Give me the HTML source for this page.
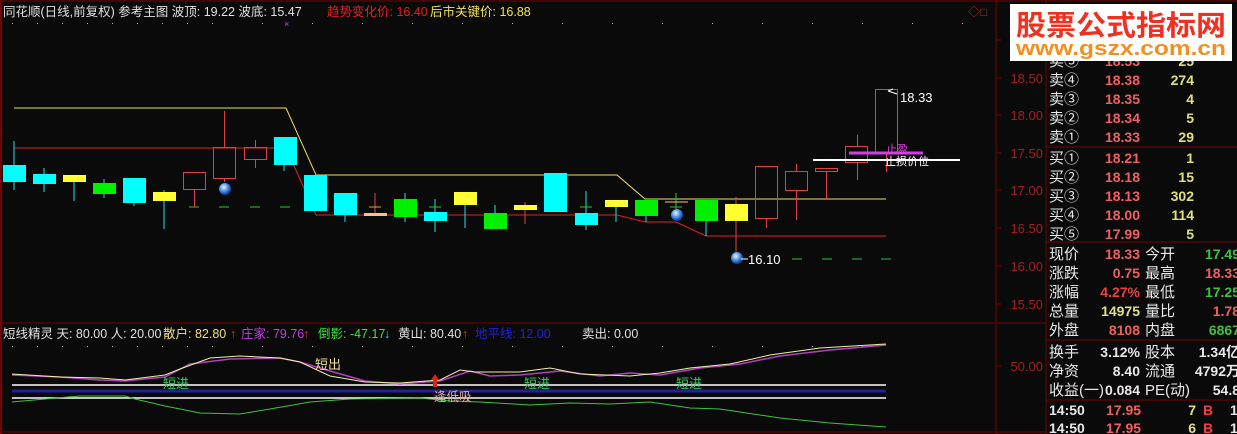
<!DOCTYPE html>
<html><head><meta charset="utf-8"><style>
html,body{margin:0;padding:0;background:#0a0a0a;width:1237px;height:434px;overflow:hidden}
svg{display:block}
text{font-family:"Liberation Sans","Noto Sans CJK SC",sans-serif}
</style></head><body>
<svg width="1237" height="434" viewBox="0 0 1237 434" xmlns="http://www.w3.org/2000/svg">
<rect width="1237" height="434" fill="#0a0a0a"/>
<line x1="1" y1="0" x2="1" y2="434" stroke="#700" stroke-width="2"/>
<line x1="0" y1="1" x2="1237" y2="1" stroke="#700"/>
<line x1="996" y1="0" x2="996" y2="434" stroke="#700"/>
<line x1="1046" y1="0" x2="1046" y2="434" stroke="#700"/>
<line x1="0" y1="323" x2="1046" y2="323" stroke="#700"/>
<line x1="0" y1="432" x2="1046" y2="432" stroke="#700"/>
<line x1="1046" y1="147" x2="1237" y2="147" stroke="#700"/>
<line x1="1046" y1="242" x2="1237" y2="242" stroke="#700"/>
<line x1="1046" y1="340" x2="1237" y2="340" stroke="#700"/>
<line x1="1046" y1="400" x2="1237" y2="400" stroke="#700"/>
<g stroke="#700">
<line x1="996" y1="40" x2="1001" y2="40"/><line x1="996" y1="78" x2="1001" y2="78"/><line x1="996" y1="115" x2="1001" y2="115"/><line x1="996" y1="153" x2="1001" y2="153"/><line x1="996" y1="190" x2="1001" y2="190"/><line x1="996" y1="228" x2="1001" y2="228"/><line x1="996" y1="266" x2="1001" y2="266"/><line x1="996" y1="304" x2="1001" y2="304"/><line x1="996" y1="366" x2="1001" y2="366"/>
</g>
<g fill="#a02020" font-size="13" text-anchor="end">
<text x="1043" y="83">18.50</text><text x="1043" y="120">18.00</text><text x="1043" y="158">17.50</text><text x="1043" y="195">17.00</text><text x="1043" y="233">16.50</text><text x="1043" y="271">16.00</text><text x="1043" y="309">15.50</text><text x="1043" y="371">50.00</text>
</g>
<text x="3" y="16" fill="#e0e0e0" font-size="12.5">同花顺(日线,前复权) 参考主图 波顶: 19.22 波底: 15.47</text>
<text x="327" y="16" fill="#e02020" font-size="12.5">趋势变化价: 16.40</text>
<text x="430" y="16" fill="#f0e060" font-size="12.5">后市关键价: 16.88</text>
<text x="284" y="27" fill="#c040ff" font-size="9">×</text>
<text x="968" y="16" fill="#a03030" font-size="12">◇□</text>
<g fill="#bbb">
<rect x="12" y="23" width="1" height="1"/><rect x="37" y="23" width="1" height="1"/><rect x="62" y="23" width="1" height="1"/><rect x="87" y="23" width="1" height="1"/><rect x="112" y="23" width="1" height="1"/><rect x="137" y="23" width="1" height="1"/><rect x="162" y="23" width="1" height="1"/><rect x="187" y="23" width="1" height="1"/><rect x="212" y="23" width="1" height="1"/><rect x="262" y="23" width="1" height="1"/><rect x="312" y="23" width="1" height="1"/><rect x="362" y="23" width="1" height="1"/><rect x="412" y="23" width="1" height="1"/><rect x="462" y="23" width="1" height="1"/><rect x="512" y="23" width="1" height="1"/><rect x="562" y="23" width="1" height="1"/><rect x="612" y="23" width="1" height="1"/><rect x="662" y="23" width="1" height="1"/><rect x="712" y="23" width="1" height="1"/><rect x="762" y="23" width="1" height="1"/><rect x="812" y="23" width="1" height="1"/><rect x="862" y="23" width="1" height="1"/><rect x="912" y="23" width="1" height="1"/><rect x="962" y="23" width="1" height="1"/>
</g>
<polyline points="14,108 286,108 316,175 617,175 645,199 886,199" fill="none" stroke="#f0e060" stroke-width="1"/>
<polyline points="14,148 286,148 316,215 617,215 645,222 676,222 706,236 886,236" fill="none" stroke="#e02020" stroke-width="1"/>
<g stroke="#30c030"><line x1="189" y1="207" x2="199" y2="207"/><line x1="219" y1="207" x2="229" y2="207"/><line x1="250" y1="207" x2="260" y2="207"/><line x1="280" y1="207" x2="290" y2="207"/><line x1="792" y1="259" x2="802" y2="259"/><line x1="822" y1="259" x2="832" y2="259"/><line x1="852" y1="259" x2="862" y2="259"/><line x1="881" y1="259" x2="891" y2="259"/></g>
<g stroke-width="1">
<line x1="14" y1="141" x2="14" y2="190" stroke="#20e0f0"/><rect x="3" y="165" width="23" height="17" fill="#00ffff"/>
<line x1="44" y1="168" x2="44" y2="192" stroke="#20e0f0"/><rect x="33" y="174" width="23" height="10" fill="#00ffff"/>
<line x1="74" y1="175" x2="74" y2="201" stroke="#20e0f0"/><rect x="63" y="175" width="23" height="7" fill="#ffff33"/>
<line x1="104" y1="179" x2="104" y2="198" stroke="#20e0f0"/><rect x="93" y="183" width="23" height="11" fill="#00f000"/>
<line x1="134" y1="178" x2="134" y2="206" stroke="#20e0f0"/><rect x="123" y="178" width="23" height="25" fill="#00ffff"/>
<line x1="164" y1="190" x2="164" y2="229" stroke="#20e0f0"/><rect x="153" y="192" width="23" height="9" fill="#ffff33"/>
<line x1="284" y1="137" x2="284" y2="171" stroke="#20e0f0"/><rect x="274" y="137" width="23" height="28" fill="#00ffff"/>
<rect x="304" y="175" width="23" height="36" fill="#00ffff"/>
<line x1="345" y1="193" x2="345" y2="222" stroke="#20e0f0"/><rect x="334" y="193" width="23" height="22" fill="#00ffff"/>
<line x1="375" y1="193" x2="375" y2="213" stroke="#e04040"/><line x1="369" y1="207" x2="381" y2="207" stroke="#e0a040"/><rect x="364" y="213" width="23" height="3" fill="#ffc080"/>
<line x1="405" y1="193" x2="405" y2="222" stroke="#20e0f0"/><rect x="394" y="199" width="23" height="18" fill="#00f000"/>
<line x1="435" y1="199" x2="435" y2="232" stroke="#20e0f0"/><line x1="429" y1="207" x2="441" y2="207" stroke="#30c030"/><rect x="424" y="212" width="23" height="9" fill="#00ffff"/>
<line x1="465" y1="192" x2="465" y2="228" stroke="#20e0f0"/><rect x="454" y="192" width="23" height="13" fill="#ffff33"/>
<line x1="495" y1="205" x2="495" y2="229" stroke="#20e0f0"/><rect x="484" y="213" width="23" height="16" fill="#00f000"/>
<line x1="525" y1="202" x2="525" y2="224" stroke="#e04040"/><rect x="514" y="205" width="23" height="5" fill="#ffff33"/>
<rect x="544" y="173" width="23" height="39" fill="#00ffff"/>
<line x1="586" y1="191" x2="586" y2="230" stroke="#20e0f0"/><line x1="580" y1="207" x2="592" y2="207" stroke="#30c030"/><rect x="575" y="213" width="23" height="12" fill="#00ffff"/>
<line x1="616" y1="200" x2="616" y2="222" stroke="#20e0f0"/><rect x="605" y="200" width="23" height="7" fill="#ffff33"/>
<line x1="646" y1="200" x2="646" y2="222" stroke="#20e0f0"/><rect x="635" y="200" width="23" height="16" fill="#00f000"/>
<line x1="676" y1="193" x2="676" y2="213" stroke="#30c030"/><line x1="665" y1="202" x2="688" y2="202" stroke="#ffc080"/><line x1="670" y1="207" x2="682" y2="207" stroke="#30c030"/>
<line x1="706" y1="200" x2="706" y2="236" stroke="#20e0f0"/><rect x="695" y="200" width="23" height="21" fill="#00f000"/>
<line x1="736" y1="197" x2="736" y2="258" stroke="#e04040"/><rect x="725" y="204" width="23" height="17" fill="#ffff33"/>
</g>
<g fill="none" stroke="#e04040">
<line x1="194.5" y1="190" x2="194.5" y2="207"/><rect x="183.5" y="172.5" width="22" height="17"/>
<line x1="224.5" y1="111" x2="224.5" y2="147"/><line x1="224.5" y1="179" x2="224.5" y2="182"/><rect x="213.5" y="147.5" width="22" height="31"/>
<line x1="255.5" y1="140" x2="255.5" y2="147"/><line x1="255.5" y1="160" x2="255.5" y2="168"/><rect x="244.5" y="147.5" width="22" height="12"/>
<line x1="766.5" y1="219" x2="766.5" y2="228"/><rect x="755.5" y="166.5" width="22" height="52"/>
<line x1="796.5" y1="164" x2="796.5" y2="171"/><line x1="796.5" y1="190" x2="796.5" y2="220"/><rect x="785.5" y="171.5" width="22" height="19"/>
<line x1="826.5" y1="171" x2="826.5" y2="199"/><rect x="815.5" y="168.5" width="22" height="3"/>
<line x1="857.5" y1="135" x2="857.5" y2="146"/><line x1="857.5" y1="163" x2="857.5" y2="180"/><rect x="845.5" y="146.5" width="22" height="16"/>
<line x1="886.5" y1="154" x2="886.5" y2="172"/><rect x="875.5" y="89.5" width="22" height="64"/>
</g>
<defs><radialGradient id="b" cx="40%" cy="35%" r="60%"><stop offset="0" stop-color="#eef8ff"/><stop offset="0.5" stop-color="#5aa0f0"/><stop offset="1" stop-color="#1040a0"/></radialGradient></defs>
<circle cx="225" cy="189" r="6" fill="url(#b)"/>
<circle cx="677" cy="215" r="6" fill="url(#b)"/>
<circle cx="737" cy="258" r="6" fill="url(#b)"/>
<line x1="741" y1="259" x2="748" y2="259" stroke="#fff"/>
<text x="748" y="264" fill="#fff" font-size="13">16.10</text>
<path d="M888 91 L893 89 M888 91 L897 94" stroke="#fff" fill="none"/>
<text x="900" y="102" fill="#fff" font-size="13">18.33</text>
<line x1="849" y1="153" x2="923" y2="153" stroke="#d040e0" stroke-width="3"/>
<line x1="813" y1="160" x2="960" y2="160" stroke="#fff" stroke-width="2"/>
<text x="886" y="153" fill="#e040e0" font-size="11">止盈</text>
<text x="885" y="165" fill="#fff" font-size="11">止损价位</text>
<text x="3" y="338" font-size="12.5" fill="#e0e0e0">短线精灵 天: 80.00 人: 20.00</text>
<text x="163" y="338" font-size="12.5" fill="#f0e080">散户: 82.80</text><text x="230" y="338" font-size="12.5" fill="#e03030">↑</text>
<text x="241" y="338" font-size="12.5" fill="#c040e0">庄家: 79.76</text><text x="303" y="338" font-size="12.5" fill="#e03030">↑</text>
<text x="318" y="338" font-size="12.5" fill="#40e040">倒影: -47.17</text><text x="384" y="338" font-size="12.5" fill="#40d0f0">↓</text>
<text x="398" y="338" font-size="12.5" fill="#e0e0e0">黄山: 80.40</text><text x="462" y="338" font-size="12.5" fill="#e03030">↑</text>
<text x="475" y="338" font-size="12.5" fill="#2020e0">地平线: 12.00</text>
<text x="582" y="338" font-size="12.5" fill="#e0e0e0">卖出: 0.00</text>
<g fill="#bbb"><rect x="12" y="346" width="1" height="1"/><rect x="37" y="346" width="1" height="1"/><rect x="62" y="346" width="1" height="1"/><rect x="87" y="346" width="1" height="1"/><rect x="112" y="346" width="1" height="1"/><rect x="137" y="346" width="1" height="1"/><rect x="162" y="346" width="1" height="1"/><rect x="187" y="346" width="1" height="1"/><rect x="212" y="346" width="1" height="1"/><rect x="262" y="346" width="1" height="1"/><rect x="312" y="346" width="1" height="1"/><rect x="362" y="346" width="1" height="1"/><rect x="412" y="346" width="1" height="1"/><rect x="462" y="346" width="1" height="1"/><rect x="512" y="346" width="1" height="1"/><rect x="562" y="346" width="1" height="1"/><rect x="612" y="346" width="1" height="1"/><rect x="662" y="346" width="1" height="1"/><rect x="712" y="346" width="1" height="1"/><rect x="762" y="346" width="1" height="1"/><rect x="812" y="346" width="1" height="1"/><rect x="862" y="346" width="1" height="1"/></g>
<line x1="12" y1="385" x2="886" y2="385" stroke="#fff" stroke-width="1.5"/>
<line x1="12" y1="391" x2="886" y2="391" stroke="#2020a0" stroke-width="3"/>
<line x1="12" y1="398" x2="886" y2="398" stroke="#fff" stroke-width="1.5"/>
<polyline points="12,375 60,377 100,380 125,381 165,377 190,364 230,359 280,358 300,362 330,371 365,381 400,384 440,381 470,371 490,376 520,375 560,371 600,376 630,373 660,375 700,368 740,364 780,356 830,350 886,345" fill="none" stroke="#b040c0" stroke-width="1.5"/>
<polyline points="12,374 60,377 100,378 125,380 165,375 180,369 210,358 240,356 280,358 300,362 330,376 365,382 400,383 440,380 460,370 475,372 520,372 550,368 580,374 630,376 660,373 690,368 730,364 770,355 820,348 886,344" fill="none" stroke="#f0f0a0" stroke-width="1"/>
<polyline points="12,402 45,399 80,396 125,396 135,399 165,406 200,413 240,414 270,409 310,402 350,399 420,398 450,401 480,402 530,405 570,403 610,404 650,402 690,408 720,409 740,412 780,418 830,423 886,427" fill="none" stroke="#40c040" stroke-width="1"/>
<text x="163" y="388" fill="#30d060" font-size="13">短进</text>
<text x="524" y="388" fill="#30d060" font-size="13">短进</text>
<text x="676" y="388" fill="#30d060" font-size="13">短进</text>
<text x="315" y="369" fill="#f0e0a0" font-size="13">短出</text>
<path d="M431 380 L439 380 L435 374 Z M433 380 L437 380 L437 387 L433 387 Z" fill="#e02020"/>
<text x="434" y="401" fill="#e0b0a0" font-size="12.5">逢低吸</text>
<g font-size="15" fill="#e8e8e8">
<text x="1049" y="66">卖⑤</text><text x="1049" y="85">卖④</text><text x="1049" y="104">卖③</text><text x="1049" y="123">卖②</text><text x="1049" y="142">卖①</text>
<text x="1049" y="163">买①</text><text x="1049" y="182">买②</text><text x="1049" y="201">买③</text><text x="1049" y="220">买④</text><text x="1049" y="239">买⑤</text>
</g>
<g font-size="14" font-weight="bold" fill="#f06060" text-anchor="end">
<text x="1140" y="66">18.53</text><text x="1140" y="85">18.38</text><text x="1140" y="104">18.35</text><text x="1140" y="123">18.34</text><text x="1140" y="142">18.33</text>
<text x="1140" y="163">18.21</text><text x="1140" y="182">18.18</text><text x="1140" y="201">18.13</text><text x="1140" y="220">18.00</text><text x="1140" y="239">17.99</text>
</g>
<g font-size="14" font-weight="bold" fill="#e0e080" text-anchor="end">
<text x="1194" y="66">25</text><text x="1194" y="85">274</text><text x="1194" y="104">4</text><text x="1194" y="123">5</text><text x="1194" y="142">29</text>
<text x="1194" y="163">1</text><text x="1194" y="182">15</text><text x="1194" y="201">302</text><text x="1194" y="220">114</text><text x="1194" y="239">5</text>
</g>
<rect x="1010" y="4" width="222" height="57" fill="#fff"/>
<text x="1121" y="35" fill="#f03020" font-size="28" font-weight="bold" text-anchor="middle" textLength="210" lengthAdjust="spacingAndGlyphs">股票公式指标网</text>
<text x="1121" y="55" fill="#f09020" font-size="20" font-weight="bold" text-anchor="middle" textLength="210" lengthAdjust="spacingAndGlyphs">www.gszx.com.cn</text>
<g font-size="15" fill="#e8e8e8">
<text x="1049" y="259">现价</text><text x="1049" y="278">涨跌</text><text x="1049" y="297">涨幅</text><text x="1049" y="316">总量</text><text x="1049" y="335">外盘</text>
<text x="1145" y="259">今开</text><text x="1145" y="278">最高</text><text x="1145" y="297">最低</text><text x="1145" y="316">量比</text><text x="1145" y="335">内盘</text>
<text x="1049" y="357">换手</text><text x="1049" y="376">净资</text><text x="1049" y="395">收益(一)</text>
<text x="1145" y="357">股本</text><text x="1145" y="376">流通</text><text x="1145" y="395">PE(动)</text>
</g>
<g font-size="14" font-weight="bold" text-anchor="end">
<text x="1140" y="259" fill="#f06060">18.33</text><text x="1140" y="278" fill="#f06060">0.75</text><text x="1140" y="297" fill="#f04040">4.27%</text><text x="1140" y="316" fill="#e0e080">14975</text><text x="1140" y="335" fill="#f06060">8108</text>
<text x="1240" y="259" fill="#40c040">17.49</text><text x="1240" y="278" fill="#f06060">18.33</text><text x="1240" y="297" fill="#40c040">17.25</text><text x="1240" y="316" fill="#f06060">1.78</text><text x="1240" y="335" fill="#40c040">6867</text>
<text x="1140" y="357" fill="#e8e8e8">3.12%</text><text x="1140" y="376" fill="#e8e8e8">8.40</text><text x="1140" y="395" fill="#e8e8e8">0.084</text>
<text x="1240" y="357" fill="#e8e8e8">1.34亿</text><text x="1240" y="376" fill="#e8e8e8">4792万</text><text x="1240" y="395" fill="#e8e8e8">54.8</text>
</g>
<g font-size="14" font-weight="bold">
<text x="1049" y="415" fill="#e8e8e8">14:50</text><text x="1106" y="415" fill="#f06060">17.95</text><text x="1196" y="415" fill="#e0e080" text-anchor="end">7</text><text x="1203" y="415" fill="#f04040">B</text><text x="1230" y="415" fill="#e8e8e8">1</text>
<text x="1049" y="433" fill="#e8e8e8">14:50</text><text x="1106" y="433" fill="#f06060">17.95</text><text x="1196" y="433" fill="#e0e080" text-anchor="end">6</text><text x="1203" y="433" fill="#f04040">B</text><text x="1230" y="433" fill="#e8e8e8">1</text>
</g>
</svg>
</body></html>
